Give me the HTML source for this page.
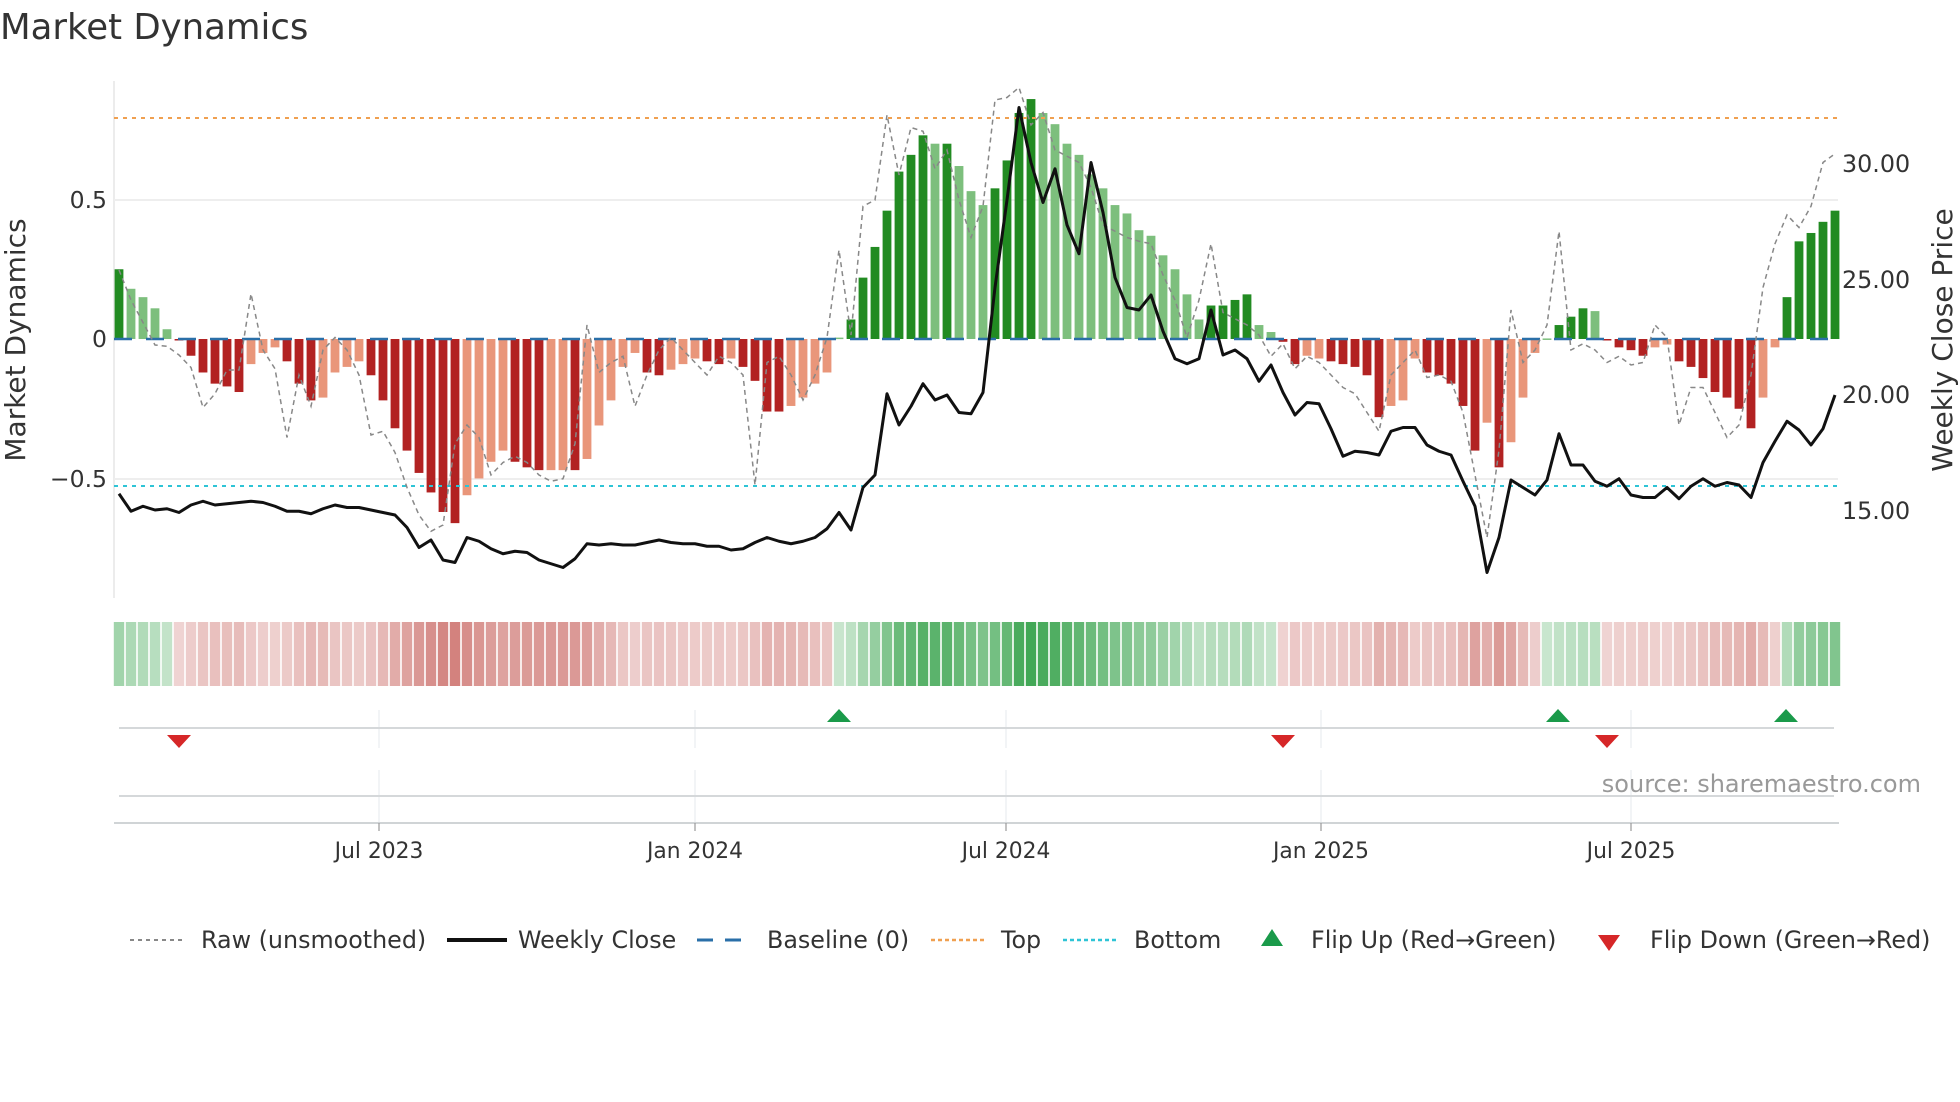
<!DOCTYPE html>
<html><head><meta charset="utf-8"><style>
html,body{margin:0;padding:0;background:#fff;width:1960px;height:1102px;overflow:hidden}
svg{display:block;font-family:"DejaVu Sans","Liberation Sans",sans-serif}
</style></head><body>
<svg id="s" width="1960" height="1102" viewBox="0 0 1960 1102" xmlns="http://www.w3.org/2000/svg">
<text x="0" y="39" font-size="35.5" fill="#333">Market Dynamics</text>
<line x1="114" y1="81" x2="114" y2="598" stroke="#e6e6e6" stroke-width="1.5"/>
<line x1="114" y1="200" x2="1838" y2="200" stroke="#eeeeee" stroke-width="2"/>
<line x1="114" y1="479" x2="1838" y2="479" stroke="#eeeeee" stroke-width="2"/>
<text x="107" y="208" font-size="23.5" fill="#333" text-anchor="end">0.5</text>
<text x="107" y="347" font-size="23.5" fill="#333" text-anchor="end">0</text>
<text x="107" y="487" font-size="23.5" fill="#333" text-anchor="end">−0.5</text>
<text x="1842" y="172" font-size="23.8" fill="#333">30.00</text>
<text x="1842" y="288" font-size="23.8" fill="#333">25.00</text>
<text x="1842" y="403" font-size="23.8" fill="#333">20.00</text>
<text x="1842" y="519" font-size="23.8" fill="#333">15.00</text>
<text transform="translate(25,340) rotate(-90)" font-size="28" fill="#333" text-anchor="middle">Market Dynamics</text>
<text transform="translate(1952,340) rotate(-90)" font-size="28" fill="#333" text-anchor="middle">Weekly Close Price</text>
<g id="bars"></g>
<line x1="114" y1="118" x2="1838" y2="118" stroke="#f0a050" stroke-width="2" stroke-dasharray="4,5"/>
<line x1="114" y1="486" x2="1838" y2="486" stroke="#2ec4d6" stroke-width="2" stroke-dasharray="4,5"/>
<line x1="114" y1="339" x2="1838" y2="339" stroke="#2a6fa8" stroke-width="2.5" stroke-dasharray="18,14"/>
<polyline id="raw" fill="none" stroke="#888" stroke-width="1.5" stroke-dasharray="5,4"/>
<polyline id="px" fill="none" stroke="#111" stroke-width="3" stroke-linejoin="round"/>
<g id="heat"></g>
<g stroke="#e8ecef" stroke-width="1.2">
<line x1="379" y1="710" x2="379" y2="748"/><line x1="695" y1="710" x2="695" y2="748"/><line x1="1006" y1="710" x2="1006" y2="748"/><line x1="1321" y1="710" x2="1321" y2="748"/><line x1="1631" y1="710" x2="1631" y2="748"/>
<line x1="379" y1="770" x2="379" y2="823"/><line x1="695" y1="770" x2="695" y2="823"/><line x1="1006" y1="770" x2="1006" y2="823"/><line x1="1321" y1="770" x2="1321" y2="823"/><line x1="1631" y1="770" x2="1631" y2="823"/>
</g>
<line x1="119" y1="728" x2="1834" y2="728" stroke="#d5d8da" stroke-width="2"/>
<line x1="119" y1="796" x2="1834" y2="796" stroke="#d5d8da" stroke-width="2"/>
<line x1="114" y1="823" x2="1839" y2="823" stroke="#d0d4d6" stroke-width="2"/>
<g stroke="#999" stroke-width="1.2"><line x1="379" y1="823" x2="379" y2="831"/><line x1="695" y1="823" x2="695" y2="831"/><line x1="1006" y1="823" x2="1006" y2="831"/><line x1="1321" y1="823" x2="1321" y2="831"/><line x1="1631" y1="823" x2="1631" y2="831"/></g>
<g font-size="21.8" fill="#333" text-anchor="middle">
<text x="379" y="858">Jul 2023</text><text x="695" y="858">Jan 2024</text><text x="1006" y="858">Jul 2024</text><text x="1321" y="858">Jan 2025</text><text x="1631" y="858">Jul 2025</text></g>
<g fill="#1a9a4a"><polygon points="839,709 827,722 851,722"/><polygon points="1558,709 1546,722 1570,722"/><polygon points="1786,709 1774,722 1798,722"/></g>
<g fill="#d62728"><polygon points="179,748 167,735 191,735"/><polygon points="1283,748 1271,735 1295,735"/><polygon points="1607,748 1595,735 1619,735"/></g>
<text x="1921" y="792" font-size="24" fill="#999" text-anchor="end">source: sharemaestro.com</text>
<g font-size="23.8" fill="#333">
<line x1="130" y1="940" x2="186" y2="940" stroke="#888" stroke-width="2" stroke-dasharray="4,4"/><text x="201" y="948">Raw (unsmoothed)</text>
<line x1="447" y1="940" x2="507" y2="940" stroke="#111" stroke-width="4"/><text x="518" y="948">Weekly Close</text>
<line x1="697" y1="940" x2="752" y2="940" stroke="#2a6fa8" stroke-width="3" stroke-dasharray="16,12"/><text x="767" y="948">Baseline (0)</text>
<line x1="931" y1="940" x2="986" y2="940" stroke="#f0a050" stroke-width="2.5" stroke-dasharray="4,3"/><text x="1001" y="948">Top</text>
<line x1="1063" y1="940" x2="1118" y2="940" stroke="#2ec4d6" stroke-width="2.5" stroke-dasharray="4,3"/><text x="1134" y="948">Bottom</text>
<polygon points="1272,929 1261,946 1283,946" fill="#1a9a4a"/><text x="1311" y="948">Flip Up (Red→Green)</text>
<polygon points="1609,951 1598,935 1620,935" fill="#d62728"/><text x="1650" y="948">Flip Down (Green→Red)</text>
</g>
</svg>
<script>
var V=[[.25,1],[.18,0],[.15,0],[.11,0],[.035,0],[-.005,1],[-.06,1],[-.12,1],[-.16,1],[-.17,1],[-.19,1],[-.09,0],[-.05,0],[-.03,0],[-.08,1],[-.16,1],[-.22,1],[-.21,0],[-.12,0],[-.10,0],[-.08,0],[-.13,1],[-.22,1],[-.32,1],[-.40,1],[-.48,1],[-.55,1],[-.62,1],[-.66,1],[-.56,0],[-.50,0],[-.44,0],[-.40,0],[-.44,1],[-.46,1],[-.47,1],[-.47,0],[-.47,0],[-.47,1],[-.43,0],[-.31,0],[-.22,0],[-.10,0],[-.05,0],[-.12,1],[-.13,1],[-.11,0],[-.09,0],[-.07,0],[-.08,1],[-.09,1],[-.07,0],[-.10,1],[-.15,1],[-.26,1],[-.26,1],[-.24,0],[-.21,0],[-.16,0],[-.12,0],[.005,0],[.07,1],[.22,1],[.33,1],[.46,1],[.60,1],[.66,1],[.73,1],[.70,0],[.70,1],[.62,0],[.53,0],[.48,0],[.54,1],[.64,1],[.81,1],[.86,1],[.81,0],[.77,0],[.70,0],[.66,0],[.59,0],[.54,0],[.48,0],[.45,0],[.39,0],[.37,0],[.30,0],[.25,0],[.16,0],[.07,0],[.12,1],[.12,1],[.14,1],[.16,1],[.05,0],[.025,0],[-.01,1],[-.09,1],[-.06,0],[-.07,0],[-.08,1],[-.09,1],[-.10,1],[-.13,1],[-.28,1],[-.24,0],[-.22,0],[-.07,0],[-.12,1],[-.13,1],[-.16,1],[-.24,1],[-.40,1],[-.30,0],[-.46,1],[-.37,0],[-.21,0],[-.05,0],[.002,0],[.05,1],[.08,1],[.11,1],[.10,0],[-.003,1],[-.03,1],[-.04,1],[-.06,1],[-.03,0],[-.02,0],[-.08,1],[-.10,1],[-.14,1],[-.19,1],[-.21,1],[-.25,1],[-.32,1],[-.21,0],[-.03,0],[.15,1],[.35,1],[.38,1],[.42,1],[.46,1]];
var P=[395,409,405,408,407,410,404,401,404,403,402,401,402,405,409,409,411,407,404,406,406,408,410,412,422,438,432,448,450,430,433,439,443,441,442,448,451,454,447,435,436,435,436,436,434,432,434,435,435,437,437,440,439,434,430,433,435,433,430,423,410,424,390,380,315,340,325,307,320,316,330,331,314,230,160,86,130,162,135,180,203,130,170,222,246,248,236,265,287,291,287,248,284,280,287,305,292,314,332,322,323,343,365,361,362,364,345,342,342,356,361,364,385,405,458,430,384,390,396,384,347,372,372,385,389,383,396,398,398,390,399,389,383,389,386,388,398,370,353,337,344,356,343,316];
var R=[216,240,258,276,277,284,294,326,315,296,296,235,280,295,350,300,325,280,270,280,300,348,345,362,390,412,425,420,355,340,350,380,370,365,370,380,385,383,355,260,298,290,285,325,300,280,270,280,290,300,285,290,300,388,290,285,300,320,300,270,200,268,165,160,92,140,102,105,135,120,160,190,165,80,78,70,100,90,120,125,130,150,180,185,190,193,195,220,240,270,240,195,250,255,260,268,285,275,295,285,290,300,310,315,330,345,300,290,280,302,300,305,330,380,430,360,248,290,280,260,185,280,275,280,290,285,292,290,260,270,340,310,310,330,350,340,300,230,195,172,182,165,130,123];
var n=V.length,x0=119,x1=1835,st=(x1-x0)/(n-1),ns="http://www.w3.org/2000/svg";
var bg=document.getElementById("bars"),hg=document.getElementById("heat");
function mk(t,a,p){var e=document.createElementNS(ns,t);for(var k in a)e.setAttribute(k,a[k]);p.appendChild(e);}
function mix(c,t){var w=[255,255,255];return "rgb("+c.map(function(v,i){return Math.round(w[i]+(v-w[i])*t)}).join(",")+")";}
var pr=[],rw=[];
for(var i=0;i<n;i++){var cx=x0+i*st,v=V[i][0],d=V[i][1],h=v*279,y=339-Math.max(h,0);
var col=v>=0?(d?"#228b22":"#7dbf7d"):(d?"#b22222":"#e9967a");
mk("rect",{x:cx-4.4,y:y,width:8.8,height:Math.max(Math.abs(h),1.5),fill:col},bg);
var t=Math.min(1,0.28+Math.abs(v)*0.8);
mk("rect",{x:cx-st/2+0.8,y:622,width:st-1.6,height:64,fill:v>=0?mix([60,165,80],t):mix([200,100,95],t)},hg);
var k=Math.round(i*(P.length-1)/(n-1));pr.push(cx+","+(P[Math.min(k,P.length-1)]*1.25));
var k2=Math.round(i*(R.length-1)/(n-1));rw.push(cx+","+(R[Math.min(k2,R.length-1)]*1.25));}
document.getElementById("px").setAttribute("points",pr.join(" "));
document.getElementById("raw").setAttribute("points",rw.join(" "));
</script>
</body></html>
